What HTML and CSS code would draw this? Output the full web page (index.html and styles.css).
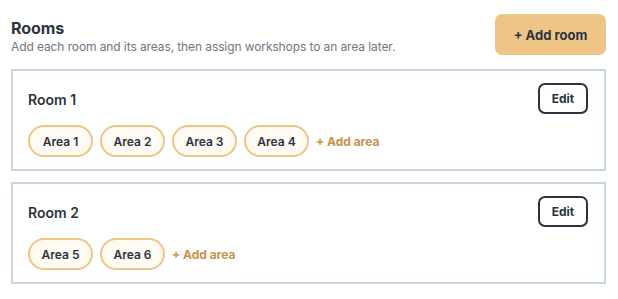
FILE: index.html
```html
<!DOCTYPE html>
<html>
<head>
<meta charset="utf-8">
<link rel="stylesheet" href="styles.css">
</head>
<body>
<div class="page">
  <header class="head">
    <div class="head-text">
      <h1 class="title">Rooms</h1>
      <p class="sub">Add each room and its areas, then assign workshops to an area later.</p>
    </div>
    <button class="add-room">+ Add room</button>
  </header>
  <section class="card">
    <div class="card-head">
      <h2 class="room">Room 1</h2>
      <button class="edit">Edit</button>
    </div>
    <div class="areas">
      <span class="pill">Area 1</span>
      <span class="pill">Area 2</span>
      <span class="pill">Area 3</span>
      <span class="pill">Area 4</span>
      <span class="add-area">+ Add area</span>
    </div>
  </section>
  <section class="card">
    <div class="card-head">
      <h2 class="room">Room 2</h2>
      <button class="edit">Edit</button>
    </div>
    <div class="areas">
      <span class="pill">Area 5</span>
      <span class="pill">Area 6</span>
      <span class="add-area">+ Add area</span>
    </div>
  </section>
</div>
</body>
</html>
```
FILE: styles.css
```css
* { box-sizing: border-box; }
html, body { margin: 0; padding: 0; background: #fff; }
body {
  font-family: "Inter", "Noto Sans", "Liberation Sans", sans-serif;
  color: #2a3440;
}
.page {
  width: 595px;
  margin-left: 11px;
  padding-top: 14px;
  display: flex;
  flex-direction: column;
  gap: 11px;
}
.head {
  display: flex;
  justify-content: space-between;
  align-items: flex-start;
  height: 44px;
}
.head-text { padding-top: 4px; }
.title {
  margin: 0;
  font-size: 16px;
  font-weight: 700;
  line-height: 20px;
  letter-spacing: -0.1px;
}
.sub {
  margin: 1px 0 0 0;
  font-size: 12px;
  line-height: 16px;
  color: #6d7884;
  letter-spacing: -0.1px;
}
.add-room {
  width: 111px;
  height: 41px;
  border: none;
  border-radius: 7px;
  background: #efc587;
  color: #2a3440;
  font-family: inherit;
  font-size: 13px;
  font-weight: 700;
  padding: 0;
}
.card {
  border: 2px solid #c6d6e4;
  padding: 12px 16px 12px 15px;
  display: flex;
  flex-direction: column;
  gap: 11px;
}
.card-head {
  display: flex;
  justify-content: space-between;
  align-items: center;
}
.room {
  margin: 0;
  font-size: 14px;
  font-weight: 600;
  line-height: 18px;
  padding-top: 3px;
}
.edit {
  width: 50px;
  height: 31px;
  border: 2px solid #2a3440;
  border-radius: 7px;
  background: #fff;
  color: #2a3440;
  font-family: inherit;
  font-size: 12px;
  font-weight: 700;
  padding: 0;
}
.areas {
  display: flex;
  align-items: center;
  gap: 7px;
}
.pill {
  display: inline-flex;
  align-items: center;
  justify-content: center;
  width: 65px;
  height: 32px;
  border: 2px solid #efc587;
  border-radius: 16px;
  background: #fffaf2;
  font-size: 12px;
  font-weight: 600;
  color: #2a3440;
}
.add-area {
  font-size: 12px;
  font-weight: 700;
  color: #c9914a;
  margin-left: 0;
}
```
